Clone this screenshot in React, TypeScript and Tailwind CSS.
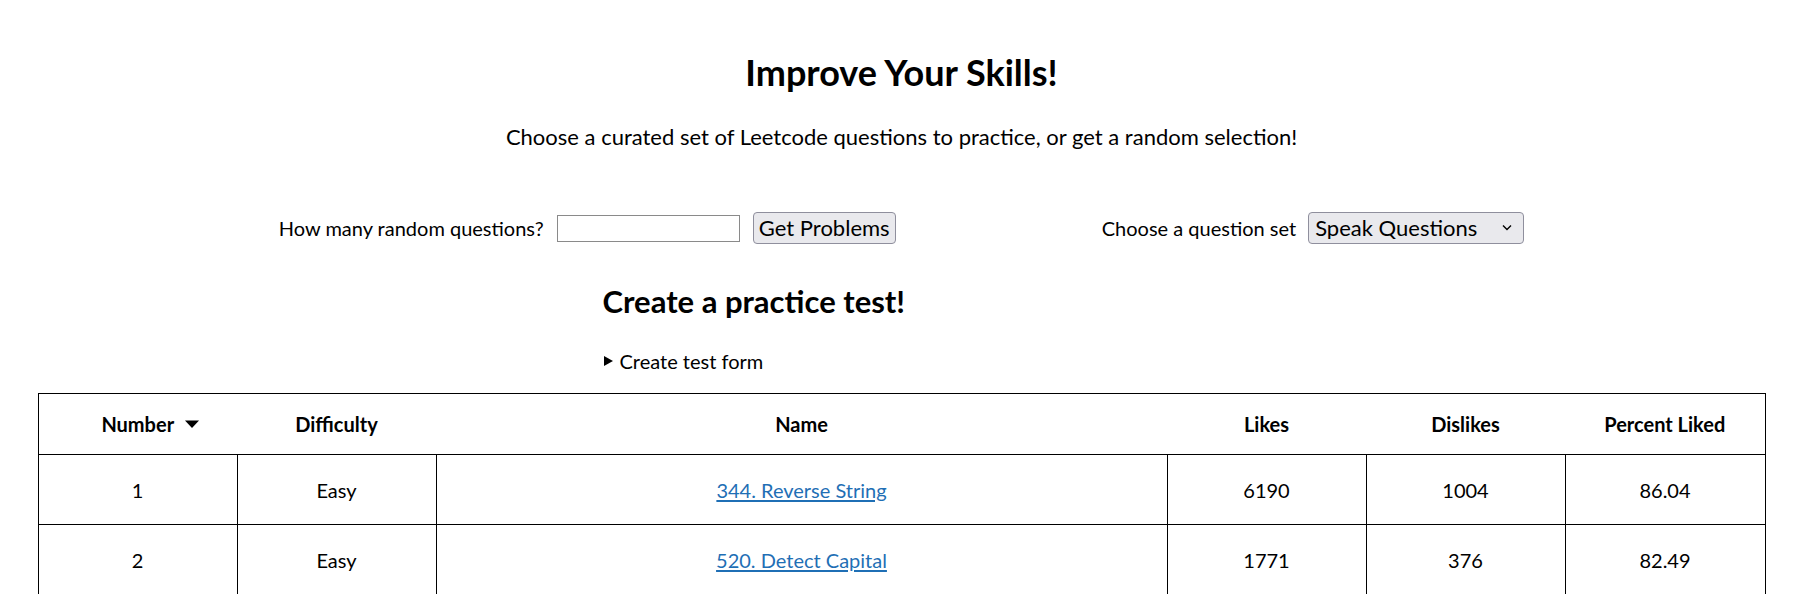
import React, { useState } from 'react';

type Question = {
  number: number;
  difficulty: string;
  name: string;
  likes: number;
  dislikes: number;
  percent: string;
};

const questions: Question[] = [
  { number: 1, difficulty: 'Easy', name: '344. Reverse String', likes: 6190, dislikes: 1004, percent: '86.04' },
  { number: 2, difficulty: 'Easy', name: '520. Detect Capital', likes: 1771, dislikes: 376, percent: '82.49' },
];

const font = { fontFamily: '"Segoe UI", Lato, "Noto Sans", sans-serif' };

const App: React.FC = () => {
  const [count, setCount] = useState('');
  const [set, setSet] = useState('speak');

  return (
    <div className="w-[1803px] bg-white text-black pb-10" style={font}>
      <h1 className="mt-[51px] text-center text-[36px] font-bold leading-[42px]">Improve Your Skills!</h1>
      <p className="mt-[29px] text-center text-[22px] leading-[30px]">
        Choose a curated set of Leetcode questions to practice, or get a random selection!
      </p>

      <div className="mt-[60px] flex h-[32px] items-center justify-center gap-[206px]">
        <div className="flex items-center">
          <label className="text-[20px] leading-[28px]">How many random questions?</label>
          <input
            value={count}
            onChange={e => setCount(e.target.value)}
            className="ml-[13px] h-[27px] w-[183px] border border-[#8a8a8a] bg-white px-1 text-[18px] outline-none"
          />
          <button className="ml-[13px] h-[32px] w-[143px] rounded-[4px] border border-[#8f8f9d] bg-[#e9e9ed] text-[22px] leading-none">
            Get Problems
          </button>
        </div>
        <div className="flex items-center">
          <label className="text-[20px] leading-[28px]">Choose a question set</label>
          <div className="relative ml-[12px]">
            <select
              value={set}
              onChange={e => setSet(e.target.value)}
              className="h-[32px] w-[216px] appearance-none rounded-[4px] border border-[#8f8f9d] bg-[#e9e9ed] pl-[6px] text-[22px] leading-none outline-none"
              style={font}
            >
              <option value="speak">Speak Questions</option>
              <option value="blind">Blind 75</option>
            </select>
            <svg className="pointer-events-none absolute right-[12px] top-[12px]" width="10" height="7" viewBox="0 0 10 7">
              <path d="M1 1.5l4 4 4-4" fill="none" stroke="#000" strokeWidth="1.4" />
            </svg>
          </div>
        </div>
      </div>

      <div className="mx-auto w-[598px]">
        <h2 className="mt-[39px] text-[31px] font-bold leading-[36px]">Create a practice test!</h2>
        <details className="mt-[28px]">
          <summary className="flex list-none items-center text-[20px] leading-[28px] [&::-webkit-details-marker]:hidden">
            <svg className="mr-[6px]" width="11" height="12" viewBox="0 0 11 12">
              <path d="M1 1l9 5-9 5z" fill="#000" />
            </svg>
            Create test form
          </summary>
        </details>
      </div>

      <table className="mx-auto mt-[18px] w-[1727px] table-fixed border-collapse border border-black text-[20px]">
        <colgroup>
          <col className="w-[199px]" />
          <col className="w-[199px]" />
          <col className="w-[731px]" />
          <col className="w-[199px]" />
          <col className="w-[199px]" />
          <col className="w-[200px]" />
        </colgroup>
        <thead>
          <tr className="h-[61px] border-b border-black font-bold">
            <th className="text-center">
              <span className="relative inline-block">
                Number
                <svg className="absolute left-full top-1/2 ml-[10px] -translate-y-1/2" width="16" height="9" viewBox="0 0 16 9">
                  <path d="M1 1h14l-7 7.5z" fill="#000" />
                </svg>
              </span>
            </th>
            <th className="text-center">Difficulty</th>
            <th className="text-center">Name</th>
            <th className="text-center">Likes</th>
            <th className="text-center">Dislikes</th>
            <th className="text-center">Percent Liked</th>
          </tr>
        </thead>
        <tbody>
          {questions.map(q => (
            <tr key={q.number} className="h-[70px]">
              <td className="border border-black text-center">{q.number}</td>
              <td className="border border-black text-center">{q.difficulty}</td>
              <td className="border border-black text-center">
                <a href="#" className="text-[#1f6fb5] underline underline-offset-2">{q.name}</a>
              </td>
              <td className="border border-black text-center">{q.likes}</td>
              <td className="border border-black text-center">{q.dislikes}</td>
              <td className="border border-black text-center">{q.percent}</td>
            </tr>
          ))}
        </tbody>
      </table>
    </div>
  );
};

export default App;
